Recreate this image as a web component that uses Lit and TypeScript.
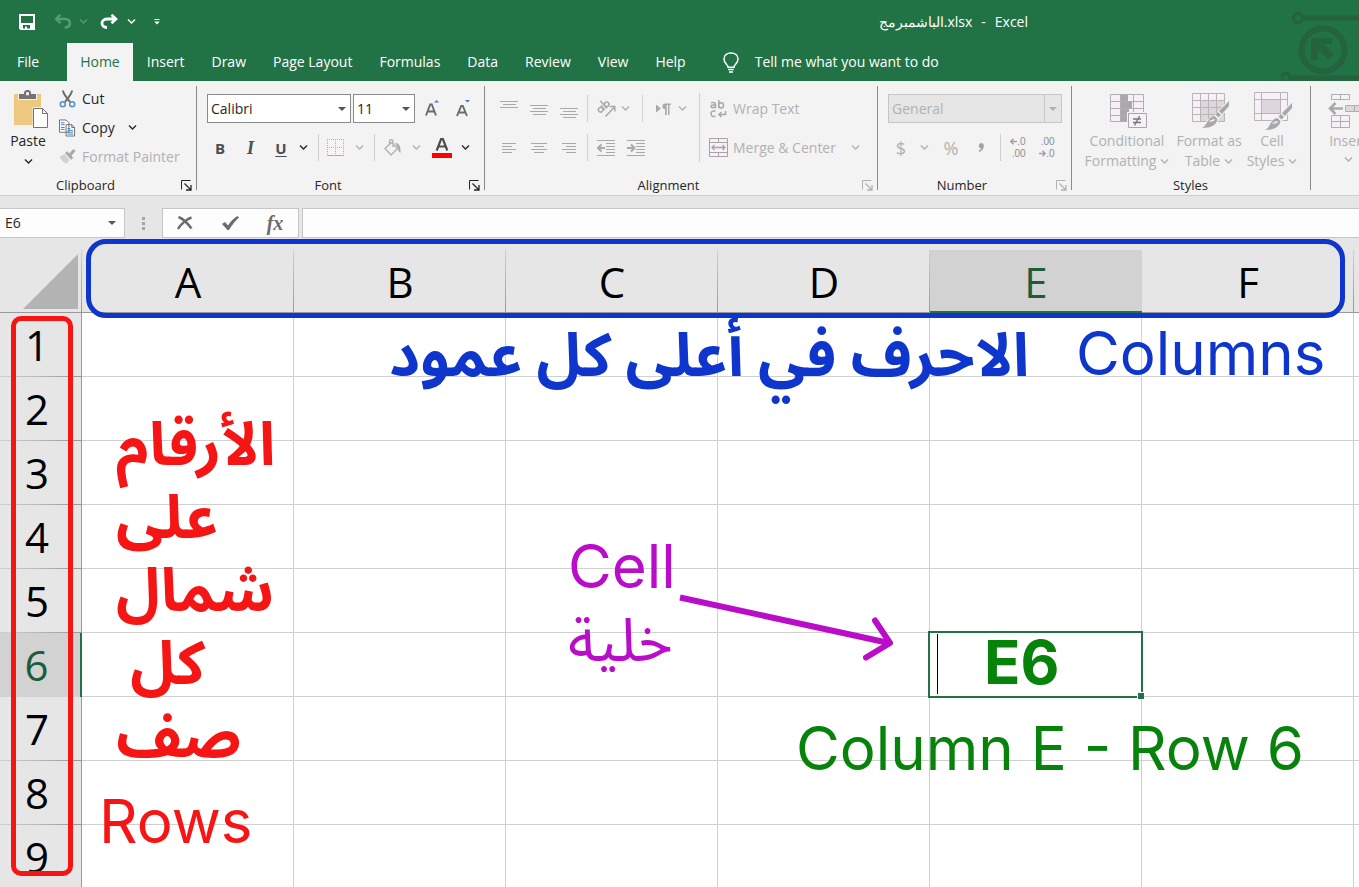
import { LitElement, html, svg, css, nothing } from "lit";
import { customElement, state } from "lit/decorators.js";
import { classMap } from "lit/directives/class-map.js";

const chevron = html`<svg class="chev" viewBox="0 0 9 9" width="9" height="9" aria-hidden="true">
  <path d="M1 2.600 4.500 6 8 2.600" fill="none" stroke="currentColor" stroke-width="1.400" /></svg>`;

const triangle = html`<svg class="tri" viewBox="0 0 8 4" width="8" height="4" aria-hidden="true">
  <path d="M0 0h8L4 4z" fill="currentColor" /></svg>`;

const icons = {
  save: html`<svg width="16" height="16" viewBox="0 0 16 16"><path fill="#fff" fill-rule="evenodd" d="M0 0h16v16H1.500L0 14.500zM2 2v7h12V2zM4 11v3.600h2V12.500h2v2.100h3V11z"/></svg>`,
  undo: html`<svg width="18" height="15" viewBox="0 0 18 15"><path fill="none" stroke="#579a76" stroke-width="2.600" d="M2 5h9.500c6 .3 6 8.500-1 8.500"/><path fill="none" stroke="#579a76" stroke-width="2.400" d="M6.500.8 2 5l4.500 4.200"/></svg>`,
  redo: html`<svg width="18" height="15" viewBox="0 0 18 15"><path fill="none" stroke="#fff" stroke-width="2.800" d="M15.500 5H7C.3 5.300.3 13.500 7 13.500"/><path fill="none" stroke="#fff" stroke-width="2.600" d="M11.500.8 16 5l-4.500 4.200"/></svg>`,
  customize: html`<svg width="6" height="6" viewBox="0 0 6 6"><path fill="#fff" d="M.5 0h5v1h-5zM.3 2.600h5.400L3 5.600z"/></svg>`,
  bulb: html`<svg width="16" height="21" viewBox="0 0 16 21"><path fill="none" stroke="#fff" stroke-width="1.500" d="M5 15.300c0-3-4-4-4-8C1 3.300 4 1 8 1s7 2.300 7 6.300c0 4-4 5-4 8zM5.200 17.600h5.600M6 20h4"/></svg>`,
  paste: html`<svg width="34" height="39" viewBox="0 0 34 39"><path fill="#edc87e" d="M0 4h27v31H0z"/><path fill="#f3f3f3" d="M4 3h19v7H4zM18.500 17H34v22H18.500z"/><path fill="#737373" fill-rule="evenodd" d="M5 4h5V2l2-2h3l2 2v2h5v5H5zM12 2.300v3h3v-3z"/><path fill="#fff" stroke="#737373" d="M19.500 18.500h9l5 5v14h-14z"/><path fill="none" stroke="#737373" d="M28.500 18.500v5h5"/></svg>`,
  cut: html`<svg width="16" height="18" viewBox="0 0 16 18"><path fill="none" stroke="#6b6b6b" stroke-width="2" d="M3.500.5c0 3 2.500 6 7 11.500M12.500.5c0 3-2.500 6-7 11.500"/><circle cx="3.300" cy="14.300" r="2.500" fill="none" stroke="#5a8fc4" stroke-width="1.500"/><circle cx="12.700" cy="14.300" r="2.500" fill="none" stroke="#5a8fc4" stroke-width="1.500"/></svg>`,
  copy: html`<svg width="18" height="18" viewBox="0 0 18 18"><path fill="#fff" stroke="#6b6b6b" d="M.5.5h7l3 3v10H.5zM7.500 5.500h6l3 3v9h-9z"/><path stroke="#6b6b6b" fill="none" d="M13.500 5.500v3h3"/><path stroke="#3f7fbf" d="M2 3.500h4M2 5.500h4M2 8.500h4M2 10.500h4M9 9.500h3M9 11.500h6M9 13.500h6M9 15.500h6"/></svg>`,
  painter: html`<svg width="16" height="15" viewBox="0 0 16 15"><path fill="#d5d0d3" d="m0 8 5-3 5 6-3 4-4-3z"/><path fill="#a9a9a9" d="m5.500 4 2.200-1.700 2 2.200L14 0l2 2-4 4.700 1.700 2-2 2z"/></svg>`,
  grow: html`<svg width="14" height="17" viewBox="0 0 14 17"><path d="M9 2.500h5L11.500 0z" fill="#3f7fbf"/><path d="m1 15.500 4.200-11h1.600l4.200 11M2.800 11.500h6.400" fill="none" stroke="#6b6b6b" stroke-width="1.900"/></svg>`,
  shrink: html`<svg width="14" height="17" viewBox="0 0 14 17"><path d="M9 0h5l-2.500 2.500z" fill="#3f7fbf"/><path d="m1 16 4.200-10h1.600L11 16M2.800 12.500h6.400" fill="none" stroke="#6b6b6b" stroke-width="1.900"/></svg>`,
  borders: html`<svg width="18" height="18" viewBox="0 0 18 18"><path fill="#f7f3f7" d="M0 0h17v17H0z"/><path stroke="#b0acb0" stroke-dasharray="1 1" d="M0 .5h18M0 8.500h18M.5 0v17M8.500 0v17M16.500 0v17"/><path stroke="#a9a9a9" d="M0 16.500h17"/></svg>`,
  bucket: html`<svg width="18" height="17" viewBox="0 0 18 17"><path fill="none" stroke="#b0b0b0" stroke-width="1.300" d="m1 9.500 6.500-6 6 6-6.500 6.500zM5.500 6V2.500c0-2.500 3.500-2.500 3.500 0V8"/><path fill="#b0b0b0" d="M11 4c4 0 6 2.500 5.500 10-2-1-2.500-3-3-5z"/></svg>`,
  fontColor: html`<svg width="20" height="20" viewBox="0 0 20 20"><path d="M4.700 12.500 9.200.8h1.600l4.500 11.700M6.500 8.500h7" fill="none" stroke="#4d4d4d" stroke-width="2.200"/><path fill="#f00" d="M0 15h20v5H0z"/></svg>`,
  orientation: html`<svg width="19" height="17" viewBox="0 0 19 17"><g fill="none" stroke="#a9a9a9" stroke-width="1.500"><g transform="rotate(-42 6 7)"><circle cx="2.500" cy="7.500" r="2.300"/><path d="M5.300 4.500v6M8 .5v10"/><circle cx="10.500" cy="7.500" r="2.300"/></g><path d="M8.500 16.500 17.500 7M13 6.500h4.800v5"/></g></svg>`,
  direction: html`<svg width="16" height="12" viewBox="0 0 16 12"><path fill="#a9a9a9" d="m0 1.500 5 4-5 4zM8 6C5.500 5 6 .5 9 .5h6V2h-1.500v10H12V2h-1.300v10H9V6z"/></svg>`,
  wrap: html`<svg width="17" height="18" viewBox="0 0 17 18"><g fill="none" stroke="#a9a9a9" stroke-width="1.500"><path d="M1 2.800c3-1 4.500 0 4.500 1.500v4M5.500 5C2 4.700.8 5.500 1 6.700c.3 1.600 3 1.300 4.500-.2M8.800 0v8M8.800 5c.5-3.300 4.700-2.800 4.700.5S9.300 8.800 8.800 6M5.500 11.300c-3-1-4.500.5-4.500 2.500s2 3.500 4.500 2.300M15.500 11v3.500H9M11.500 12 9 14.500l2.500 2.500"/></g></svg>`,
  merge: html`<svg width="19" height="19" viewBox="0 0 19 19"><path fill="#f7f0f7" stroke="#a9a3a8" d="M.5.5h18v18H.5zM.5 4.500h18M.5 14.500h18M9.500.5v4M9.500 14.500v4"/><path fill="none" stroke="#a9a3a8" stroke-width="1.300" d="M3 9.500h13M5.500 7 3 9.500 5.500 12M13.500 7 16 9.500 13.500 12"/></svg>`,
  comma: html`<svg width="6" height="9" viewBox="0 0 6 9"><path fill="#a3a3a3" d="M3 0a2.800 2.800 0 0 1 2.800 3C5.800 6 4 8.300.8 9V7.300C2.300 6.800 3 6 3 5.500A2.800 2.800 0 0 1 3 0z"/></svg>`,
  conditional: html`<svg width="37" height="34" viewBox="0 0 37 34"><path fill="#f7f0f7" stroke="#b1b0b1" d="M.5.500h33v27H.5zM.5 7.500h33M.5 14.500h33M.5 21.500h33M10.500.5v27M23.500.5v27"/><path fill="#a9a7a9" d="M11 1h7v6h-7zM11 8h11v6H11zM11 15h8v6h-8zM11 22h6v5h-6z"/><path fill="#f3f3f3" d="M17 18h20v16H17z"/><path fill="#f7f0f7" stroke="#a9a7a9" d="M18.500 19.500h18v14h-18z"/><path stroke="#777" stroke-width="1.300" d="M23 25h8M23 28.500h8M29.500 22l-5 9.500"/></svg>`,
  table: html`<svg width="37" height="35" viewBox="0 0 37 35"><path fill="#f7f0f7" d="M.5.5h32v28H.5z"/><path fill="#ddd6db" d="M8.500 7.500h24v21h-24z"/><path fill="none" stroke="#b8b4b7" d="M.5.500h32v28H.5zM.5 7.500h32M.5 14.500h32M.5 21.500h32M8.500.5v28M16.500.5v28M24.500.5v28"/>${brush()}</svg>`,
  cellStyles: html`<svg width="38" height="38" viewBox="0 0 38 38"><path fill="#f7f0f7" stroke="#b8b4b7" d="M.5.500h33v28H.5zM.5 7.500h33M.5 21.500h33M7.500.5v28M26.500.5v28"/><path fill="#ddd6db" d="M8 8h18v13H8z"/><g transform="translate(1 3)">${brush()}</g></svg>`,
  insert: html`<svg width="42" height="36" viewBox="0 0 42 36"><path fill="#f7f0f7" stroke="#b1adb0" d="M3.500 1.500h18v5h-18zM12.500 1.500v5M3.500 22.500h18v12h-18zM3.500 28.500h18M12.500 22.500v12"/><path fill="#ddd6db" stroke="#b1adb0" d="M17.500 12.500h27v6h-27zM26.500 12.500v6"/><path fill="none" stroke="#a9a9a9" stroke-width="2.600" d="M1.500 15.500H15M7.500 10 2 15.500 7.500 21"/></svg>`,
  launcher: html`<svg width="11" height="11" viewBox="0 0 11 11"><path fill="none" stroke="currentColor" d="M.5 9.500V.5h9"/><path fill="none" stroke="currentColor" stroke-width="1.300" d="m3.500 3.500 6 6M10 5v5H5"/></svg>`,
  cancel: html`<svg width="16" height="14" viewBox="0 0 16 14"><path fill="none" stroke="#6b6b6b" stroke-width="2.400" d="M1.500 1c3 1 9 6 13 11.500M14.500 1.500C10 3 4 8 1 13"/></svg>`,
  enter: html`<svg width="17" height="14" viewBox="0 0 17 14"><path fill="#6b6b6b" d="m0 8 3-2 3 3.500C8.500 5.500 12 2 15.500 0L17 1.500C13 5 9.500 9.500 7 14H5.500z"/></svg>`,
  more: html`<svg width="3" height="13" viewBox="0 0 3 13"><path fill="#a6a6a6" d="M0 0h3v3H0zM0 5h3v3H0zM0 10h3v3H0z"/></svg>`,
  logo: html`<svg class="logo" width="78" height="76" viewBox="0 0 78 76"><g fill="none" stroke="#24633e"><circle cx="17" cy="13" r="4.500" stroke-width="3.500"/><path stroke-width="5" d="M21 13h57M7 73h71"/><circle cx="42" cy="45" r="21.500" stroke-width="6"/><circle cx="5" cy="73" r="4.500" stroke-width="3.500"/></g><path fill="#24633e" d="M30 33h21v6h-8l10 10-5 6-11-10v9l-7 2z"/></svg>`,
};

function brush() {
  return svg`<path fill="#f3f3f3" d="M37 6v9L27 26c-2 6-6 9-18 9 5-2 4-10 13-12z"/>
    <path fill="#a9a7a9" d="M37 8v5l-7 8-3-3zM26 19l3 3-2.500 2.500-3-3zM22.500 23l3 3c-1 6-6 9-15.500 9 6-3 5-11 12.500-12z"/>
    <path fill="#f3f3f3" d="M16 28c3 0 4-2 7-2-1 3-4 3-7 2z"/>`;
}

function lines(rows: number[][], width: number, height: number) {
  return html`<svg width=${width} height=${height} viewBox="0 0 ${width} ${height}">
    ${rows.map(([x, y, w]) => svg`<path stroke="#a9a9a9" d="M${x} ${y + 0.5}h${w}"/>`)}</svg>`;
}

const topAlign = lines([[0, 1, 18], [3, 4, 13], [0, 7, 18]], 18, 18);
const midAlign = lines([[0, 5, 18], [3, 8, 13], [0, 11, 18], [3, 14, 13]], 18, 18);
const botAlign = lines([[0, 9, 18], [3, 12, 13], [0, 15, 18], [3, 18, 13]], 18, 19);
const leftAlign = lines([[0, 0, 14], [0, 3, 10], [0, 6, 14], [0, 9, 10]], 14, 10);
const centerAlign = lines([[0, 0, 16], [3, 3, 10], [0, 6, 16], [3, 9, 10]], 16, 10);
const rightAlign = lines([[0, 0, 14], [4, 3, 10], [0, 6, 14], [4, 9, 10]], 14, 10);

function indent(right: boolean) {
  return html`<svg width="18" height="16" viewBox="0 0 18 16">
    <path stroke="#a9a9a9" d="M0 .5h18M9 3.500h9M9 6.500h9M9 9.500h9M9 12.500h9M0 15.500h18"/>
    <path fill="none" stroke="#a9a9a9" stroke-width="2" d=${right ? "M0 8h7M4 4.500 7.500 8 4 11.500" : "M8 8H1M4.500 4.500 1 8l3.500 3.500"} /></svg>`;
}

function decimals(decrease: boolean) {
  return html`<span class="decimals">
    <span>${decrease ? ".00" : html`${arrow(false)}.0`}</span>
    <span>${decrease ? html`${arrow(true)}.0` : ".00"}</span></span>`;
}

function arrow(right: boolean) {
  return html`<svg width="7" height="7" viewBox="0 0 7 7"><path fill="none" stroke="#a3a3a3" stroke-width="1.600"
    d=${right ? "M0 3.500h6M3.500.8 6.200 3.500 3.500 6.200" : "M7 3.500H1M3.500.8.8 3.500l2.700 2.700"} /></svg>`;
}

const TABS = ["File", "Home", "Insert", "Draw", "Page Layout", "Formulas", "Data", "Review", "View", "Help"];
const COLUMNS = ["A", "B", "C", "D", "E", "F", ""];
const ROWS = [1, 2, 3, 4, 5, 6, 7, 8, 9];

@customElement("app-root")
export class AppRoot extends LitElement {
  @state() private tab = "Home";

  static styles = css`
    :host {
      display: flex;
      flex-direction: column;
      height: 100vh;
      overflow: hidden;
      background: #e6e6e6;
      color: #262626;
      font: 14px/20px "Open Sans", "Noto Sans", sans-serif;
    }
    * { box-sizing: border-box; }
    svg { display: block; flex: none; }
    button, input, select {
      margin: 0;
      padding: 0;
      border: 0;
      border-radius: 0;
      background: none;
      color: inherit;
      font: inherit;
    }
    button {
      display: flex;
      align-items: center;
      justify-content: center;
      white-space: nowrap;
    }
    button:disabled, select:disabled { color: #b1b1b1; opacity: 1; }

    .top { position: relative; background: #217346; color: #fff; overflow: hidden; }
    .logo { position: absolute; right: 0; top: 5px; }
    .title {
      display: grid;
      grid-template-columns: 54px 18px 22px 30px 14px 38px 1fr;
      align-items: center;
      height: 43px;
    }
    .title .faded { color: #579a76; }
    .doc { display: flex; justify-content: flex-end; gap: 9px; padding-right: 331px; }
    .tabs { display: flex; gap: 1px; height: 38px; }
    .tab { padding: 0 13px; height: 38px; }
    .tab.first { padding: 0 27px 0 17px; }
    .tab.active { background: #f3f3f3; color: #217346; }
    .tell { gap: 16px; padding: 0 23px; }

    .ribbon {
      display: flex;
      height: 115px;
      background: #f3f3f3;
      border-bottom: 1px solid #d0d0d0;
      overflow: hidden;
    }
    .group {
      display: grid;
      grid-template-rows: 78px 18px;
      align-content: start;
      row-gap: 9px;
      flex: none;
      margin-top: 5px;
      padding-top: 3px;
      background: linear-gradient(#8a8a8a, #8a8a8a) right top / 1px 104px no-repeat;
    }
    .clipboard { width: 197px; }
    .font { width: 288px; }
    .alignment { width: 393px; }
    .number { width: 194px; }
    .styles { width: 239px; }
    .cells { width: 240px; background: none; }
    .foot {
      display: grid;
      grid-template-columns: 1fr 18px;
      column-gap: 6px;
      padding-right: 2px;
      align-items: center;
      text-align: center;
      font-size: 13px;
      line-height: 18px;
    }
    .foot.plain { display: block; }
    .row { display: grid; align-items: center; height: 39px; }
    .rule { width: 1px; height: 27px; background: #d0d0d0; justify-self: center; }

    .clip { display: grid; grid-template-columns: 56px 1fr; }
    .paste { flex-direction: column; justify-content: flex-start; gap: 2px; padding-top: 1px; }
    .paste svg:first-child { margin-left: 6px; }
    .paste .chev { margin-top: 4px; }
    .clip ul { list-style: none; margin: 0; padding: 0; }
    .clip li button { height: 29px; padding: 0 3px; gap: 6px; }
    .clip li:first-child button { height: 20px; margin-bottom: 4px; }
    .clip li svg:first-child { width: 17px; }
    .clip li .chev { margin-left: 7px; }

    .font .row1 { grid-template-columns: 144px 62px 29px 29px; column-gap: 2px; padding-left: 10px; }
    .font .row2 { grid-template-columns: 30px 31px 30px 14px 16px 20px 26px 4px 34px 12px 40px 6px; padding-left: 8px; }
    .combo { display: grid; height: 29px; border: 1px solid #8a8a8a; background: #fff; }
    .combo > * { grid-area: 1 / 1; }
    .combo select, .combo input { width: 100%; min-width: 0; appearance: none; padding: 0 3px; outline: none; }
    .combo .tri { place-self: center end; margin-right: 4px; color: #555; pointer-events: none; }
    .bold { font-size: 15px; font-weight: 700; color: #4d4d4d; }
    .italic { font: italic 700 18px/20px "Liberation Serif", serif; color: #4d4d4d; }
    .under { font-size: 15px; font-weight: 700; color: #4d4d4d; text-decoration: underline 1px; text-underline-offset: 2px; }

    .align { display: grid; grid-template-columns: 214px 1fr; }
    .align .row1 { grid-template-columns: 30px 30px 30px 6px 32px 6px 28px 16px 20px 16px; padding-left: 9px; }
    .align .row2 { grid-template-columns: 30px 30px 30px 6px 32px 28px; padding-left: 9px; }
    .wide { border-left: 1px solid #d0d0d0; margin-top: 4px; height: 69px; padding-left: 9px; }
    .wide button { height: 31px; gap: 5px; }
    .wide button + button { margin-top: 4px; height: 39px; }
    .wide svg:first-child { width: 19px; }
    .wide .chev { margin-left: 10px; }

    .number .row1 { padding: 0 10px; }
    .number .combo { background: #e6e6e6; border-color: #c6c6c6; }
    .number .tri { color: #b1b1b1; margin-right: 4px; }
    .number .split { place-self: stretch end; width: 17px; border-left: 1px solid #c6c6c6; }
    .number .row2 { grid-template-columns: 30px 16px 38px 22px 16px 20px 38px; padding-left: 8px; }
    .sign { font-size: 18px; height: 20px; line-height: 18px; }
    .decimals { display: grid; font: 10px/11px "Liberation Sans", sans-serif; justify-items: end; color: #8f8f8f; }
    .decimals > span { display: flex; align-items: center; height: 12px; }
    .big-row { display: grid; }
    .styles .big-row { grid-template-columns: 92px 72px 54px; padding-left: 9px; }
    .big { flex-direction: column; justify-content: flex-start; padding-top: 1px; }
    .big .pic { display: grid; flex: none; place-items: center; height: 41px; padding-left: 2px; }
    .big .line { display: flex; align-items: center; gap: 4px; height: 20px; }
    .cells .big { width: 60px; margin-left: 7px; }
    .cells .line { gap: 0; }

    .formula { display: flex; height: 42px; padding-top: 12px; }
    .formula .combo, .fx, .entry { height: 30px; border: 1px solid #c6c6c6; background: #fdfdfd; }
    .name { width: 125px; }
    .formula .name { border-left: 0; }
    .formula .combo input { padding-left: 5px; }
    .formula .tri { margin-right: 8px; }
    .dots { display: grid; place-items: center; width: 37px; }
    .fx { display: grid; grid-template-columns: 44px 46px 44px; width: 137px; margin-right: 3px; }
    .fn { font: italic 700 20px/20px "Liberation Serif", serif; color: #6b6b6b; }
    .entry { flex: 1; min-width: 0; border-right: 0; }

    .sheet { position: relative; flex: 1; min-height: 0; overflow: hidden; background: #fff; }
    table { border-collapse: separate; border-spacing: 0; table-layout: fixed; width: 1566px; }
    th { padding: 0; font-weight: 400; font-size: 42px; line-height: 56px; color: #000; background: #e6e6e6; }
    .corner-col { width: 82px; }
    thead th {
      height: 75px;
      padding-top: 14px;
      border-bottom: 1px solid #999;
      background:
        linear-gradient(#d0d0d0, #999) right bottom / 1px 62px no-repeat, #e6e6e6;
    }
    thead th.corner { padding: 16px 3px 3px 23px; }
    .corner svg { width: 55px; height: 55px; }
    thead th.on {
      color: #1e5c38;
      border-bottom: 2px solid #217346;
      background: linear-gradient(#d2d2d2, #d2d2d2) 0 100% / 100% 61px no-repeat, #e6e6e6;
    }
    tbody th {
      height: 64px;
      padding-right: 7px;
      border-right: 1px solid #999;
      background: linear-gradient(90deg, #d0d0d0, #999) 0 100% / 100% 1px no-repeat, #e6e6e6;
    }
    tbody th.on { color: #1e5c38; background: #d2d2d2; border-right: 2px solid #217346; }
    td { padding: 0; border-right: 1px solid #d0d0d0; border-bottom: 1px solid #d0d0d0; }

    .note {
      position: absolute;
      margin: 0;
      white-space: pre;
      font: 400 60px/73px Inter, "Noto Sans Arabic", "DejaVu Sans", sans-serif;
    }
    .blue { color: #0e35cc; }
    .red { color: #f51515; }
    .violet { color: #b90dca; }
    .green { color: #07820b; }
    .strong { font-weight: 700; }
    .frame { position: absolute; border: 5px solid; }
    .frame-cols { left: 86px; top: 1px; width: 1259px; height: 79px; border-radius: 20px; }
    .frame-rows { left: 11px; top: 78px; width: 62px; height: 560px; border-radius: 10px; }
    .n-cols { left: 1076px; top: 79px; }
    .n-cols-ar { left: 389px; top: 80px; }
    .n-rows-ar { left: 116px; top: 169px; }
    .n-rows { left: 99px; top: 547px; }
    .n-cell { left: 568px; top: 292px; }
    .n-e6 { left: 984px; top: 388px; }
    .n-formula { left: 796px; top: 474px; }
    .pointer { position: absolute; left: 678px; top: 354px; }
    .cursor { position: absolute; left: 928px; top: 393px; width: 215px; height: 67px; border: 2px solid #217346; }
    .cursor::before { content: ""; position: absolute; left: 7px; top: 1px; width: 1px; height: 60px; background: #000; }
    .cursor::after {
      content: ""; position: absolute; right: -3px; bottom: -3px; width: 6px; height: 6px;
      background: #217346; border: solid #fff; border-width: 1px 0 0 1px;
    }
  `;

  private tool(label: string, content: unknown, disabled = false, cls = "") {
    return html`<button class=${cls} aria-label=${label} ?disabled=${disabled}>${content}</button>`;
  }

  private foot(name: string, launcher = true, disabled = false) {
    return html`<div class=${classMap({ foot: true, plain: !launcher })}><span>${name}</span>
      ${launcher ? this.tool(`${name} settings`, icons.launcher, disabled) : nothing}</div>`;
  }

  private big(icon: unknown, first: string, second: string) {
    return html`<button class="big" disabled>
      <span class="pic">${icon}</span><span>${first}</span><span class="line">${second}${chevron}</span></button>`;
  }

  render() {
    const rule = html`<span class="rule"></span>`;
    return html`
      <header class="top">
        ${icons.logo}
        <div class="title">
          ${this.tool("Save", icons.save)}
          ${this.tool("Undo", icons.undo)}
          ${this.tool("Undo list", chevron, false, "faded")}
          ${this.tool("Redo", icons.redo)}
          ${this.tool("Redo list", chevron)}
          ${this.tool("Customize toolbar", icons.customize)}
          <div class="doc"><span>الباشمبرمج.xlsx</span><span>-</span><span>Excel</span></div>
        </div>
        <nav class="tabs">
          ${TABS.map((t, i) => html`<button
            class=${classMap({ tab: true, first: i === 0, active: t === this.tab })}
            @click=${() => (this.tab = t)}>${t}</button>`)}
          <button class="tell">${icons.bulb}<span>Tell me what you want to do</span></button>
        </nav>
      </header>

      <section class="ribbon">
        <div class="group clipboard">
          <div class="clip">
            <button class="paste">${icons.paste}<span>Paste</span>${chevron}</button>
            <ul>
              <li><button>${icons.cut}Cut</button></li>
              <li><button>${icons.copy}Copy${chevron}</button></li>
              <li><button disabled>${icons.painter}Format Painter</button></li>
            </ul>
          </div>
          ${this.foot("Clipboard")}
        </div>

        <div class="group font">
          <div>
            <div class="row row1">
              <label class="combo"><select aria-label="Font"><option>Calibri</option></select>${triangle}</label>
              <label class="combo"><select aria-label="Font size"><option>11</option></select>${triangle}</label>
              ${this.tool("Increase font size", icons.grow)}
              ${this.tool("Decrease font size", icons.shrink)}
            </div>
            <div class="row row2">
              <button class="bold">B</button><button class="italic">I</button><button class="under">U</button>
              ${this.tool("Underline style", chevron)}${rule}
              ${this.tool("Borders", icons.borders, true)}${this.tool("Border style", chevron, true)}${rule}
              ${this.tool("Fill color", icons.bucket, true)}${this.tool("Fill colors", chevron, true)}
              ${this.tool("Font color", icons.fontColor)}${this.tool("Font colors", chevron)}
            </div>
          </div>
          ${this.foot("Font")}
        </div>

        <div class="group alignment">
          <div class="align">
            <div>
              <div class="row row1">
                ${this.tool("Top align", topAlign, true)}${this.tool("Middle align", midAlign, true)}${this.tool("Bottom align", botAlign, true)}
                ${rule}${this.tool("Orientation", icons.orientation, true)}${this.tool("Orientation list", chevron, true)}
                ${rule}${this.tool("Text direction", icons.direction, true)}${this.tool("Direction list", chevron, true)}
              </div>
              <div class="row row2">
                ${this.tool("Align left", leftAlign, true)}${this.tool("Center", centerAlign, true)}${this.tool("Align right", rightAlign, true)}
                ${rule}${this.tool("Decrease indent", indent(false), true)}${this.tool("Increase indent", indent(true), true)}
              </div>
            </div>
            <div class="wide">
              <button disabled>${icons.wrap}Wrap Text</button>
              <button disabled>${icons.merge}Merge &amp; Center${chevron}</button>
            </div>
          </div>
          ${this.foot("Alignment", true, true)}
        </div>

        <div class="group number">
          <div>
            <div class="row row1">
              <label class="combo"><select aria-label="Number format" disabled><option>General</option></select>
                <span class="split"></span>${triangle}</label>
            </div>
            <div class="row row2">
              <button class="sign" disabled>$</button>${this.tool("Currency list", chevron, true)}
              <button class="sign" disabled>%</button>${this.tool("Comma style", icons.comma, true)}${rule}
              ${this.tool("Increase decimal", decimals(false), true)}${this.tool("Decrease decimal", decimals(true), true)}
            </div>
          </div>
          ${this.foot("Number", true, true)}
        </div>

        <div class="group styles">
          <div class="big-row">
            ${this.big(icons.conditional, "Conditional", "Formatting")}
            ${this.big(icons.table, "Format as", "Table")}
            ${this.big(icons.cellStyles, "Cell", "Styles")}
          </div>
          ${this.foot("Styles", false)}
        </div>

        <div class="group cells">${this.big(icons.insert, "Insert", "")}</div>
      </section>

      <section class="formula">
        <label class="combo name"><input aria-label="Name box" value="E6" />${triangle}</label>
        <span class="dots">${icons.more}</span>
        <div class="fx">
          ${this.tool("Cancel", icons.cancel)}${this.tool("Enter", icons.enter)}
          <button class="fn" aria-label="Insert function">fx</button>
        </div>
        <input class="entry" aria-label="Formula bar" />
      </section>

      <main class="sheet">
        <table>
          <colgroup><col class="corner-col" />${COLUMNS.map(() => html`<col />`)}</colgroup>
          <thead><tr>
            <th class="corner"><svg viewBox="0 0 55 55"><path fill="#b3b3b3" d="M55 0v55H0z"/></svg></th>
            ${COLUMNS.map((c) => html`<th scope="col" class=${classMap({ on: c === "E" })}>${c}</th>`)}
          </tr></thead>
          <tbody>
            ${ROWS.map((r) => html`<tr><th scope="row" class=${classMap({ on: r === 6 })}>${r}</th>
              ${COLUMNS.map(() => html`<td></td>`)}</tr>`)}
          </tbody>
        </table>
        <div class="cursor"></div>
        <div class="frame frame-cols blue"></div>
        <div class="frame frame-rows red"></div>
        <p class="note blue n-cols">Columns</p>
        <p class="note blue strong n-cols-ar">الاحرف في أعلى كل عمود</p>
        <p class="note red strong n-rows-ar">الأرقام<br />على<br />شمال<br /> كل<br />صف</p>
        <p class="note red n-rows">Rows</p>
        <p class="note violet n-cell">Cell<br />خلية</p>
        <p class="note green strong n-e6">E6</p>
        <p class="note green n-formula">Column E - Row 6</p>
        <svg class="pointer" width="218" height="72" viewBox="0 0 218 72">
          <path d="M2 5.500 211 51" fill="none" stroke="#b90dca" stroke-width="6"/>
          <path d="M197 28.500 212 51 188 65.500" fill="none" stroke="#b90dca" stroke-width="6" stroke-linecap="round" stroke-linejoin="round"/>
        </svg>
      </main>
    `;
  }
}
